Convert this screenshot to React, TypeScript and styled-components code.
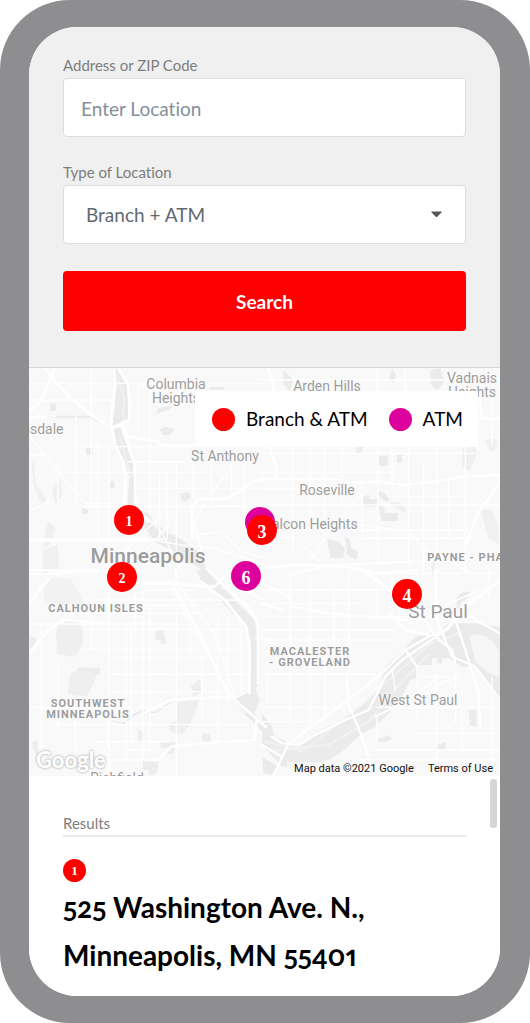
import React from "react";
import styled, { createGlobalStyle } from "styled-components";

const Global = createGlobalStyle`
  *, *::before, *::after { box-sizing: border-box; }
  body {
    margin: 0;
    background: #fff;
    font-family: Lato, "Open Sans", sans-serif;
    font-variant-ligatures: none;
  }
`;

const Device = styled.div`
  display: flex;
  min-height: 100vh;
  padding: 27px 30px 27px 29px;
  border-radius: 70px;
  background: #8e8e90;
`;

const Screen = styled.main`
  flex: 1;
  min-width: 0;
  display: flex;
  flex-direction: column;
  overflow: hidden;
  border-radius: 48px;
  background: #fff;
`;

const SearchForm = styled.form`
  padding: 28px 34px 36px;
  background: #f0f0f0;
  border-bottom: 1px solid #d8d8d8;
`;

const Field = styled.div`
  display: flex;
  flex-direction: column;
  gap: 3px;
  margin-bottom: 25px;
`;

const Label = styled.label`
  font-size: 15px;
  line-height: 20px;
  color: #7d7d7d;
`;

const Input = styled.input`
  width: 100%;
  height: 59px;
  padding: 1px 17px 0;
  border: 1px solid #d6dee6;
  border-radius: 4px;
  background: #fff;
  font: 400 19px/24px Lato, sans-serif;
  font-variant-ligatures: none;
  color: #5f6972;
  &::placeholder { color: #84909a; opacity: 1; }
`;

const SelectWrap = styled.div`
  position: relative;
`;

const Select = styled.select`
  display: block;
  width: 100%;
  height: 59px;
  padding: 1px 48px 0 22px;
  border: 1px solid #d6dee6;
  border-radius: 4px;
  background: #fff;
  appearance: none;
  font: 400 19px/24px Lato, sans-serif;
  color: #5f6972;
`;

const Caret = styled.svg`
  position: absolute;
  right: 24px;
  top: 26px;
  pointer-events: none;
`;

const SearchButton = styled.button`
  display: block;
  width: 100%;
  height: 60px;
  margin-top: 27px;
  padding: 2px 0 0;
  border: 0;
  border-radius: 4px;
  background: #fe0000;
  color: #fff;
  font: 700 19px/24px Lato, sans-serif;
`;

const MapArea = styled.section`
  position: relative;
  height: 408px;
  overflow: hidden;
  background: #f9f9f9;
`;

const MapArt = styled.svg`
  display: block;
  width: 100%;
  height: 100%;
`;

type Kind = "town" | "city" | "capital" | "district";

const labelFonts: Record<Kind, string> = {
  town: "400 14px/14px Roboto, sans-serif",
  city: "500 21px/24px Roboto, sans-serif",
  capital: "400 19px/22px Roboto, sans-serif",
  district: "700 11px/11px Roboto, sans-serif",
};

const Place = styled.span<{ $x: number; $y: number; $kind: Kind }>`
  position: absolute;
  left: ${(p) => p.$x}px;
  top: ${(p) => p.$y}px;
  transform: translate(-50%, -50%);
  white-space: pre;
  text-align: center;
  font: ${(p) => labelFonts[p.$kind]};
  letter-spacing: ${(p) => (p.$kind === "district" ? "1px" : "normal")};
  color: #9c9c9c;
  text-shadow: 0 0 2px #fff, 0 0 2px #fff;
`;

const red = "#fe0000";
const magenta = "#dc009c";

const Pin = styled.button<{ $x: number; $y: number; $atm?: boolean; $low?: boolean }>`
  position: absolute;
  left: ${(p) => p.$x}px;
  top: ${(p) => p.$y}px;
  width: 30px;
  height: 30px;
  margin: -15px 0 0 -15px;
  padding: 3px 0 0;
  border: 0;
  border-radius: 50%;
  background: ${(p) => (p.$atm ? magenta : red)};
  color: #fff;
  font: 700 ${(p) => (p.$low ? "14px" : "18px")}/20px "Liberation Serif", serif;
`;

const Legend = styled.ul`
  position: absolute;
  top: 23px;
  right: 22px;
  display: flex;
  align-items: center;
  gap: 21px;
  height: 56px;
  margin: 0;
  padding: 0 15px 0 17px;
  list-style: none;
  background: #fff;
`;

const LegendItem = styled.li`
  display: flex;
  align-items: center;
  gap: 11px;
  font-size: 19px;
  line-height: 24px;
  color: #000;
`;

const Dot = styled.span<{ $color: string }>`
  width: 23px;
  height: 23px;
  border-radius: 50%;
  background: ${(p) => p.$color};
`;

const GoogleMark = styled.span`
  position: absolute;
  left: 7px;
  bottom: 6px;
  font: 700 22px/20px Lato, sans-serif;
  color: #fff;
  text-shadow: 0 0 3px #b4b4b4, 0 0 2px #c4c4c4;
`;

const Attribution = styled.div`
  position: absolute;
  right: 0;
  bottom: 0;
  display: flex;
  gap: 14px;
  padding: 0 7px;
  background: rgba(249, 249, 249, 0.7);
  font: 400 11px/14px Roboto, sans-serif;
  color: #111;
  a { color: inherit; text-decoration: none; }
`;

const Results = styled.section`
  position: relative;
  flex: 1;
  padding: 37px 34px 17px;
  background: #fff;
`;

const ResultsTitle = styled.h2`
  margin: 0 0 22px;
  padding-bottom: 2px;
  border-bottom: 2px solid #e8e8e8;
  font-size: 15px;
  line-height: 20px;
  font-weight: 400;
  color: #7d7d7d;
`;

const Badge = styled.span`
  display: block;
  width: 23px;
  height: 23px;
  margin-bottom: 1px;
  border-radius: 50%;
  background: ${red};
  color: #fff;
  text-align: center;
  font: 700 13px/23px "Liberation Serif", serif;
`;

const Address = styled.address`
  font-style: normal;
  font-weight: 700;
  font-size: 28px;
  line-height: 48px;
  font-variant-numeric: oldstyle-nums proportional-nums;
  color: #000;
`;

const ScrollThumb = styled.span`
  position: absolute;
  top: 3px;
  right: 3px;
  width: 7px;
  height: 49px;
  border-radius: 3px;
  background: #d6d6d6;
`;

const places: { text: string; x: number; y: number; kind: Kind }[] = [
  { text: "Columbia\nHeights", x: 147, y: 23, kind: "town" },
  { text: "Arden Hills", x: 298, y: 18, kind: "town" },
  { text: "Vadnais\nHeights", x: 443, y: 17, kind: "town" },
  { text: "Robbinsdale", x: -4, y: 61, kind: "town" },
  { text: "St Anthony", x: 196, y: 88, kind: "town" },
  { text: "Roseville", x: 298, y: 122, kind: "town" },
  { text: "Falcon Heights", x: 282, y: 156, kind: "town" },
  { text: "Minneapolis", x: 119, y: 188, kind: "city" },
  { text: "PAYNE - PHALEN", x: 448, y: 189, kind: "district" },
  { text: "CALHOUN ISLES", x: 67, y: 240, kind: "district" },
  { text: "St Paul", x: 409, y: 244, kind: "capital" },
  { text: "MACALESTER\n- GROVELAND", x: 281, y: 289, kind: "district" },
  { text: "SOUTHWEST\nMINNEAPOLIS", x: 59, y: 341, kind: "district" },
  { text: "West St Paul", x: 389, y: 332, kind: "town" },
  { text: "Richfield", x: 88, y: 410, kind: "town" },
];

const pins = [
  { n: "1", x: 100, y: 152, low: true },
  { n: "2", x: 93, y: 209, low: true },
  { n: "5", x: 231, y: 154, atm: true },
  { n: "3", x: 233, y: 162 },
  { n: "6", x: 217, y: 208, atm: true },
  { n: "4", x: 378, y: 226 },
];

/* Terrain is drawn in a 1413 x 1224 space, three units to a pixel, one group per quarter. */
const Terrain = () => (
  <MapArt viewBox="0 0 1413 1224" preserveAspectRatio="xMidYMid slice" aria-hidden="true">
    <g fill="#ebebeb">
      <g transform="translate(-3 -9)">
        <path d="M262 9H272L298 60 303 90 304 160 278 188 292 220 312 270 321 330 316 420H298L304 340 290 290 266 250 254 200 252 180 262 120Z" />
        <path d="M345 440L362 445 380 480 400 485 410 500 440 510 490 545 530 575 530 620 500 600 440 560 380 530 350 490Z" />
        <path d="M66 115h18v22h-18zM174 248h20v22h-20zM246 348h13v22h-13zM162 425l18 10v12h-18zM85 152h105l18 10 16 15-20-8-20-10H85zM390 130l45-8-10 12-42 12zM395 195l15-10 30 8-15 18-20-2zM458 388l20-8 12 12-16 18-14-6zM546 66h42v8h-42z" />
        <path d="M16 280l8 80 30 40-8 25-25-50-10-60zM70 380l28-40 6 50-20 25zM60 470l24 20-20 50-20 10zM44 555l45-15 5 80-50 5z" opacity=".65" />
      </g>
      <g transform="translate(699 -9)">
        <path d="M64 14l30 30-10 40-20-30zM390 10l12 20-6 25-14-14zM506 14l30-4 10 40-22 26-18-20zM350 272h26l3 26-20 7-11-8zM404 270h16v22h-16zM282 248l22-4-6 20h-15zM300 400l20-12 4 15h20v22h-42zM350 375l18 10 15 20-15 5-18-20zM348 422h16l6 22h38v24h-48zM195 522l34 8 20 20-6 30h-38zM250 515l14 10 5 25 20 10-6 25-28-15zM205 200l12 5 3 30-12 6z" />
        <path d="M600 250l40-10 4 30-22 50-22-15zM670 225l35-5v30l-22 12zM655 432l35 5 20 50v50l-30-15zM385 410l30 5 20 20-5 10-38-20zM505 580l12 10 4 40h-10z" opacity=".65" />
      </g>
      <g transform="translate(-3 606)">
        <path d="M95 160Q120 138 155 160Q168 180 165 210Q162 240 135 262L110 255 84 250Q90 235 84 200Q84 175 95 160ZM128 310Q160 290 193 300Q210 310 205 320Q190 360 175 378Q140 380 118 370ZM445 395L515 387Q505 420 495 440 480 475 468 487 445 495 430 485 415 475 430 460L445 450Z" opacity=".7" />
        <path d="M382 184l24-4 8 40h-15v-10h-17zM148 293h68v20h-18l-30-10h-20zM522 490h25v25h-25zM398 516h44v16l-8 20h-16v-18h-20zM345 570h45v30l-12 15h-16v-15h-17zM330 480l20 5-8 35-12-4zM488 350l28-24 4 40-22 15zM5 200l18 2 2 22-20 15zM10 520l18-12 2 50-12 -15z" opacity=".85" />
        <path d="M45 40L80 20 130 30 150 60 165 100 150 140 135 130 130 100 90 110 50 95Z" opacity=".5" />
        <path d="M506 0L545 0 580 45 640 110 680 150 690 205 688 270 690 350 664 365 668 210 655 170 600 115 560 70 520 35Z" />
        <path d="M230 445L285 458 320 430 345 420 380 425 430 390 432 395 382 430 345 426 322 436 287 463Z" />
        <path d="M610 390l70-40 15 40-15 40 32 40v25L670 450 640 425z" />
      </g>
      <g transform="translate(699 606)">
        <path d="M0 430L30 470 38 500 80 520 110 525 160 490 250 445 310 400 350 360 370 290 430 235 460 200 530 185 560 160 640 160 714 170V380L640 290 600 290 560 265H540V280H525V265H510V285H465V325L445 330 415 390 380 430 340 470 300 490 240 545 200 570 140 590 60 590 0 525Z" />
        <path d="M50 590L30 615 5 610 0 560ZM620 420h24v48h-20zM345 508l35-12 10 12-20 8h-22zM522 525l28-8v22h-28zM585 80l20-15h20l-10 20-20 15v20l-12-10z" />
        <path d="M622 200Q640 185 670 200T712 245V320L680 310 640 275Z" fill="#f6f6f6" />
      </g>
    </g>
    <g fill="none" stroke="#f3f3f3" strokeWidth="5">
      <path d="M706 1120L820 1150 1000 1010 1120 900 1200 830 1300 790M720 1150L900 1130 1020 1060 1110 950 1200 860" />
      <path d="M265 20L285 90 280 180M275 210L305 330" />
    </g>
    <g fill="none" stroke="#fff" strokeWidth="4">
      <g transform="translate(-3 -9)">
        <path d="M3 55H714M3 105H260M140 245H500M90 322H550M160 424H714M3 522H420M320 370H714M330 60H500M60 620H190M0 270H50M300 290H500" />
        <path d="M190 9V430M145 150V415M210 230V520M243 240V630M365 70V450M395 320V520M418 320V520M445 300V560M495 240V400M550 90V420M648 240V450M90 290V410M330 60V200M610 240V380" />
        <path d="M3 210L60 280 170 416H260M350 450L400 500 460 620M430 470L300 620M400 450L230 620M620 290L540 400 500 470M3 440L60 410 70 380" />
        <path d="M320 480L350 520 460 540 560 550 714 600M500 510L580 500 640 560 714 580" />
      </g>
      <g transform="translate(699 -9)">
        <path d="M0 265H640M0 322H400M0 420H714M0 372H240M300 520H640M300 495H620M80 630L200 600 714 580M230 240H560M380 395H620M0 45H714" />
        <path d="M92 240V560M145 240V500M188 80V510M240 240V420M300 340V520M348 240V600M390 240V380M440 240V600M485 300V620M525 240V560M560 340V520M610 10V620M345 9V80M430 9V80M690 30V240" />
        <path d="M300 390L200 500 120 630M0 500L100 520 210 625M300 480L440 500 500 560 620 620" />
      </g>
      <g transform="translate(-3 606)">
        <path d="M3 162H450M190 90H640M190 178H640M160 238H640M250 262H600M240 313H660M240 365H620M3 412H420M90 464H660M190 515H430M100 130H520M340 60H500M340 105H500M300 540H370" />
        <path d="M40 160V600M90 270V480M190 90V240M243 40V600M295 160V560M310 160V520M345 0V560M365 100V540M445 100V620M487 180V260M522 250V450M570 130V520M600 140V400M640 160V370M142 410V540M320 60V200" />
        <path d="M420 30L500 190 560 280 600 380 650 430M440 30L560 190 620 380" />
        <path d="M240 420V520L200 600M714 205H680M620 385L660 365M580 55L610 45 714 90" />
      </g>
      <g transform="translate(699 606)">
        <path d="M0 60H390M0 140H420M0 180H400M0 210H390M0 245H270M0 312H340M0 412H250M0 455H190M465 320H590M340 412H700M450 490H700M340 540H714M400 10H714M30 100H300M280 570H714" />
        <path d="M15 310V400M85 0V460M145 0V460M190 230V450M215 60V240M260 0V310M345 0V140M390 0V120M465 290V460M525 310V570M580 300V460M600 420V540M690 320V570M345 440V520M680 0V80" />
        <path d="M300 0L380 60 420 140M440 160L500 140 560 100 680 50M390 300L400 360M440 410L520 350 590 320" />
      </g>
    </g>
    <g fill="none" stroke="#fff" strokeWidth="8" strokeLinecap="round" strokeLinejoin="round">
      <g transform="translate(-3 -9)">
        <path d="M258 9L262 60 252 130 250 180 262 240 285 290 292 340 288 420M270 9L300 60 305 120 303 165 252 188M50 9L90 60 140 110 190 150 240 185M252 188L285 180 298 215 340 222 390 228 400 242 560 242M3 158L50 157M3 140L40 105 80 9" />
        <path d="M493 520V425L510 402 600 400 640 375 670 350 714 340M3 526H370M285 195L320 300 322 420 360 470" />
        <path d="M3 615H240M500 470L510 520 530 590" strokeWidth="6" />
      </g>
      <g transform="translate(699 -9)">
        <path d="M0 342H220L250 352 360 350 420 360 520 350 600 335 714 330M20 9L35 70 30 90M20 240L45 310 40 342M714 350L680 400 645 450 615 530M0 610L90 600 250 605 350 625 470 615M520 160H714M650 75L660 160" />
      </g>
      <g transform="translate(-3 606)">
        <path d="M3 12H100L140 5 240 5M330 40H430L560 50 600 10M3 250L60 180 110 150 230 160M3 100L60 30M430 35L520 200 580 330 620 390 690 450 714 470" />
        <path d="M240 570H390L430 530 520 520 680 510 685 455M445 0V45M540 0L600 60 660 110 690 160V340M520 35L590 90 655 170 665 240 664 370M345 430L430 390 510 385 610 380" />
      </g>
      <g transform="translate(699 606)">
        <path d="M0 40L80 80 90 110 200 130 390 145 440 150M0 100L60 120M35 615L80 520 120 490 230 410 310 350 370 300 430 240 500 200 550 180 640 80M0 525L60 560M300 0L360 40 470 120 520 200 570 240 580 280" strokeWidth="7" />
        <path d="M30 500L60 520 110 525 160 495 250 450 320 420 370 320 420 270 560 175 600 120 714 30M580 150L610 240 650 370 655 470M380 130L430 180 500 195M520 0L525 150 570 260M430 240L465 290M255 310L258 400 300 500 320 560M600 120L650 155 714 190" strokeWidth="7" />
        <path d="M340 440L420 400 520 330M570 260L640 290 700 370" strokeWidth="6" />
      </g>
    </g>
  </MapArt>
);

export default function App() {
  return (
    <>
      <Global />
      <Device>
        <Screen>
          <SearchForm onSubmit={(e) => e.preventDefault()}>
            <Field>
              <Label htmlFor="location">Address or ZIP Code</Label>
              <Input id="location" type="text" placeholder="Enter Location" />
            </Field>
            <Field>
              <Label htmlFor="kind">Type of Location</Label>
              <SelectWrap>
                <Select id="kind" defaultValue="both">
                  <option value="both">Branch + ATM</option>
                  <option value="atm">ATM</option>
                </Select>
                <Caret width="11" height="7" viewBox="0 0 11 7" aria-hidden="true">
                  <path d="M1 0.5h9q1 0 .4 1L6.2 5.7q-.7.6-1.4 0L.6 1.5Q0 .5 1 .5Z" fill="#555" />
                </Caret>
              </SelectWrap>
            </Field>
            <SearchButton type="submit">Search</SearchButton>
          </SearchForm>

          <MapArea aria-label="Map of locations">
            <Terrain />
            {places.map((p) => (
              <Place key={p.text} $x={p.x} $y={p.y} $kind={p.kind}>{p.text}</Place>
            ))}
            {pins.map((p) => (
              <Pin key={p.n} type="button" aria-label={`Location ${p.n}`} $x={p.x} $y={p.y} $atm={p.atm} $low={p.low}>
                {p.n === "5" ? null : p.n}
              </Pin>
            ))}
            <Legend>
              <LegendItem><Dot $color={red} />Branch &amp; ATM</LegendItem>
              <LegendItem><Dot $color={magenta} />ATM</LegendItem>
            </Legend>
            <GoogleMark>Google</GoogleMark>
            <Attribution>
              <span>Map data ©2021 Google</span>
              <a href="#terms">Terms of Use</a>
            </Attribution>
          </MapArea>

          <Results>
            <ScrollThumb />
            <ResultsTitle>Results</ResultsTitle>
            <Badge>1</Badge>
            <Address>
              525 Washington Ave. N.,<br />
              Minneapolis, MN 55401
            </Address>
          </Results>
        </Screen>
      </Device>
    </>
  );
}
